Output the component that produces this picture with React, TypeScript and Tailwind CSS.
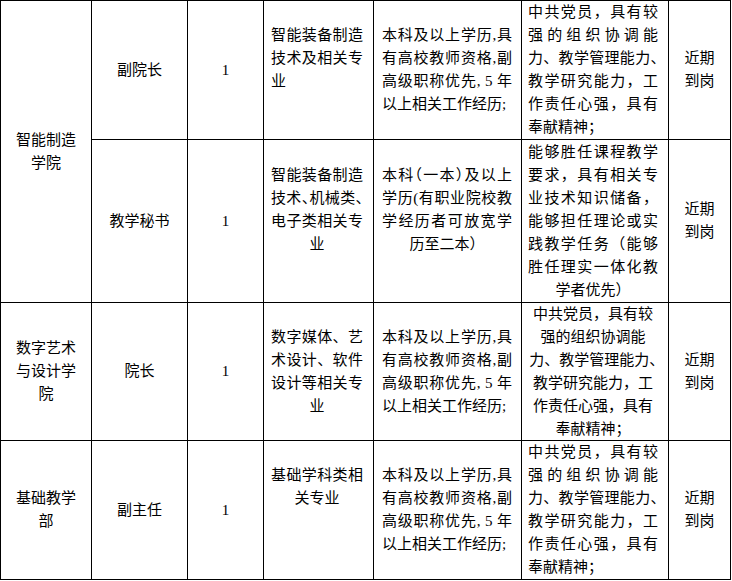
import React from 'react';

type Last = 'left' | 'center' | 'justify';

// '^' before a char renders it with half-width punctuation (halt)
const renderLine = (s: string) => {
  const out: React.ReactNode[] = [];
  let buf = '';
  for (let i = 0; i < s.length; i++) {
    if (s[i] === '^' && i + 1 < s.length) {
      if (buf) out.push(buf);
      buf = '';
      out.push(
        <span key={i} className="[font-feature-settings:'halt']">
          {s[i + 1]}
        </span>
      );
      i++;
    } else {
      buf += s[i];
    }
  }
  if (buf) out.push(buf);
  return out;
};

const Cell = ({
  lines,
  just = false,
  last = 'center',
  blank = 0,
  pad = 'px-1',
  className = '',
}: {
  lines: string[];
  just?: boolean;
  last?: Last;
  blank?: number;
  pad?: string;
  className?: string;
}) => (
  <div className={`flex flex-col justify-center border-r border-b border-black ${pad} ${className}`}>
    {lines.map((l, i) => {
      const isLast = i === lines.length - 1;
      let cls = 'text-center';
      if (just) {
        const mode = isLast ? last : 'justify';
        cls =
          mode === 'justify'
            ? 'text-justify [text-align-last:justify]'
            : mode === 'left'
            ? 'text-left'
            : 'text-center';
      }
      return (
        <div key={i} className={`h-[23px] ${cls}`}>
          {renderLine(l)}
        </div>
      );
    })}
    {Array.from({ length: blank }).map((_, i) => (
      <div key={`b${i}`} className="h-[23px]" />
    ))}
  </div>
);

const P4 = 'pl-[7px] pr-[10px]';
const P5 = 'pl-[8px] pr-[9px]';
const P6 = 'pl-[6px] pr-[10px]';

const reqA = ['本科及以上学历,具', '有高校教师资格,副', '高级职称优先, 5 年', '以上相关工作经历;'];
const partyA = [
  '中共党员，具有较',
  '强的组织协调能',
  '力、教学管理能力^、',
  '教学研究能力，工',
  '作责任心强，具有',
  '奉献精神；',
];

export default function App() {
  return (
    <div className="bg-white w-[732px] h-[581px]">
      <div className="grid w-[731px] grid-cols-[91px_96px_76px_110px_148px_147px_62px] grid-rows-[139px_163px_138px_139px] border-l border-t border-black text-black text-[15px] leading-[23px] font-['Liberation_Serif','Noto_Sans_CJK_SC',serif]">
        {/* 智能制造学院 */}
        <Cell lines={['智能制造', '学院']} className="row-span-2" />
        <Cell lines={['副院长']} />
        <Cell lines={['1']} />
        <Cell lines={['智能装备制造', '技术及相关专', '业']} just last="left" blank={1} pad={P4} />
        <Cell lines={reqA} just last="left" pad={P5} />
        <Cell lines={partyA} just last="left" pad={P6} />
        <Cell lines={['近期', '到岗']} />

        <Cell lines={['教学秘书']} />
        <Cell lines={['1']} />
        <Cell lines={['智能装备制造', '技术^、机械类^、', '电子类相关专', '业']} just last="center" blank={1} pad={P4} />
        <Cell
          lines={['本科^（一本^）及以上', '学历(有职业院校教', '学经历者可放宽学', '历至二本）']}
          just
          last="center"
          blank={1}
          pad={P5}
        />
        <Cell
          lines={[
            '能够胜任课程教学',
            '要求，具有相关专',
            '业技术知识储备，',
            '能够担任理论或实',
            '践教学任务（能够',
            '胜任理实一体化教',
            '学者优先）',
          ]}
          just
          last="center"
          pad={P6}
        />
        <Cell lines={['近期', '到岗']} />

        {/* 数字艺术与设计学院 */}
        <Cell lines={['数字艺术', '与设计学', '院']} />
        <Cell lines={['院长']} />
        <Cell lines={['1']} />
        <Cell lines={['数字媒体、艺', '术设计、软件', '设计等相关专', '业']} just last="center" pad={P4} />
        <Cell lines={reqA} just last="left" pad={P5} />
        <Cell lines={partyA} pad={P6} />
        <Cell lines={['近期', '到岗']} />

        {/* 基础教学部 */}
        <Cell lines={['基础教学', '部']} />
        <Cell lines={['副主任']} />
        <Cell lines={['1']} />
        <Cell lines={['基础学科类相', '关专业']} just last="center" blank={2} pad={P4} />
        <Cell lines={reqA} just last="left" pad={P5} />
        <Cell lines={partyA} just last="left" pad={P6} />
        <Cell lines={['近期', '到岗']} />
      </div>
    </div>
  );
}
